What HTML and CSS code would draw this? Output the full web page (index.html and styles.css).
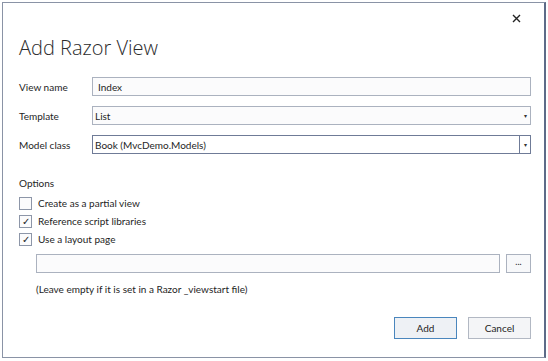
FILE: index.html
```html
<!DOCTYPE html>
<html lang="en">
<head>
    <meta charset="UTF-8">
    <title>Add Razor View</title>
    <link rel="stylesheet" href="styles.css">
</head>
<body>
    <div class="dialog">
        <div class="close-row">
            <svg class="close-icon" width="9" height="9" viewBox="0 0 9 9">
                <path d="M1 1 L8 8 M8 1 L1 8" stroke="#222" stroke-width="1.4" fill="none"/>
            </svg>
        </div>
        <h1 class="title">Add Razor View</h1>

        <div class="form-row">
            <label class="form-label">View name</label>
            <div class="field">Index</div>
        </div>
        <div class="form-row">
            <label class="form-label">Template</label>
            <div class="field select">
                <span>List</span>
                <span class="arrow">&#9662;</span>
            </div>
        </div>
        <div class="form-row">
            <label class="form-label">Model class</label>
            <div class="field select focused">
                <span>Book (MvcDemo.Models)</span>
                <span class="arrow split">&#9662;</span>
            </div>
        </div>

        <div class="options-label">Options</div>
        <div class="check-row">
            <span class="checkbox"></span>
            <span>Create as a partial view</span>
        </div>
        <div class="check-row">
            <span class="checkbox">&#10003;</span>
            <span>Reference script libraries</span>
        </div>
        <div class="check-row">
            <span class="checkbox">&#10003;</span>
            <span>Use a layout page</span>
        </div>

        <div class="layout-row">
            <div class="field layout-field"></div>
            <div class="browse-btn">...</div>
        </div>
        <div class="hint">(Leave empty if it is set in a Razor _viewstart file)</div>

        <div class="button-row">
            <div class="btn primary">Add</div>
            <div class="btn">Cancel</div>
        </div>
    </div>
</body>
</html>
```

FILE: styles.css
```css
body {
    margin: 0;
    background-color: #ffffff;
    font-family: 'Lato', 'Open Sans', sans-serif;
    font-size: 10px;
    color: #1e1e1e;
}
.dialog {
    margin: 2px 0 0 2px;
    width: 544px;
    height: 356px;
    border: 1px solid #8a93a6;
    border-right: 2px solid #5d6b88;
    padding: 0 13px 0 16px;
    box-sizing: border-box;
    display: flex;
    flex-direction: column;
}
.close-row {
    display: flex;
    justify-content: flex-end;
    height: 27px;
    padding-top: 11px;
    box-sizing: border-box;
}
.close-icon {
    margin-right: 10px;
}
.title {
    margin: 3px 0 4px 0;
    font-family: 'Open Sans', sans-serif;
    font-weight: 300;
    font-size: 20px;
    line-height: 30px;
    color: #2b2b2b;
}
.form-row {
    display: flex;
    align-items: center;
    height: 19px;
    margin-top: 10px;
}
.form-label {
    width: 73px;
    flex-shrink: 0;
}
.field {
    flex: 1;
    height: 19px;
    box-sizing: border-box;
    border: 1px solid #abb2bf;
    background: #fbfbfc;
    padding-left: 5px;
    display: flex;
    align-items: center;
}
.select {
    justify-content: space-between;
    padding-left: 2px;
}
.focused {
    border-color: #6f7b97;
    background: #ffffff;
}
.arrow {
    font-size: 6px;
    width: 10px;
    text-align: center;
    color: #333;
}
.arrow.split {
    height: 100%;
    border-left: 1px solid #6f7b97;
    display: flex;
    align-items: center;
    justify-content: center;
}
.options-label {
    margin: 21px 0 3px 0;
    height: 16px;
    line-height: 16px;
}
.check-row {
    display: flex;
    align-items: center;
    height: 18px;
}
.checkbox {
    width: 13px;
    height: 13px;
    box-sizing: border-box;
    border: 1px solid #8d96a8;
    background: #fbfbfc;
    margin-right: 6px;
    font-size: 10px;
    line-height: 11px;
    text-align: center;
    color: #222;
}
.layout-row {
    display: flex;
    margin-top: 6px;
    padding-left: 17px;
    gap: 6px;
}
.layout-field {
    height: 19px;
}
.browse-btn {
    width: 25px;
    height: 19px;
    box-sizing: border-box;
    border: 1px solid #abb2bf;
    background: #f7f8fa;
    text-align: center;
    line-height: 13px;
    font-size: 9px;
}
.hint {
    margin-top: 9px;
    padding-left: 17px;
    line-height: 14px;
}
.button-row {
    display: flex;
    justify-content: flex-end;
    gap: 11px;
    margin-top: 21px;
}
.btn {
    width: 63px;
    height: 22px;
    box-sizing: border-box;
    border: 1px solid #b2b8c3;
    background: #f4f5f7;
    display: flex;
    align-items: center;
    justify-content: center;
}
.btn.primary {
    border-color: #4a86bd;
    background: #eef1f5;
}
```
